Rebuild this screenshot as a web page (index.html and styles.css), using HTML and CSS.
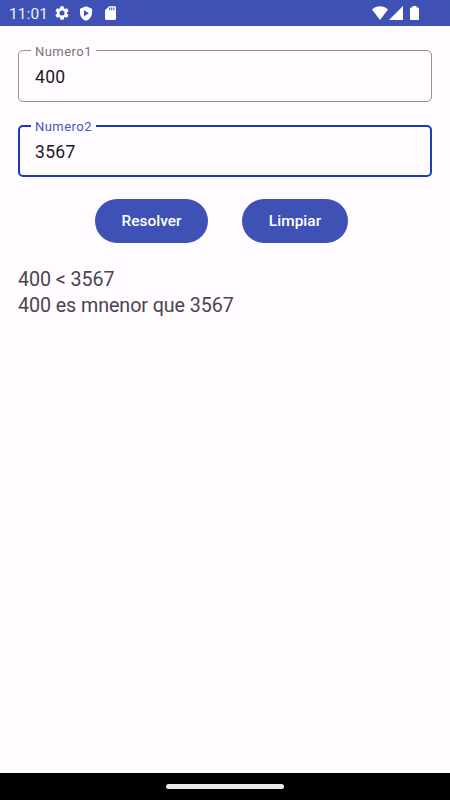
FILE: index.html
```html
<!DOCTYPE html>
<html lang="es">
<head>
<meta charset="utf-8">
<title>Comparar</title>
<link rel="stylesheet" href="styles.css">
</head>
<body>
<div class="screen">
  <header class="status">
    <span class="clock">11:01</span>
    <svg class="gear" viewBox="2 2 20 20"><path fill-rule="evenodd" d="M19.14 12.94c.04-.3.06-.61.06-.94s-.02-.64-.07-.94l2.03-1.58a.49.49 0 0 0 .12-.61l-1.92-3.32a.49.49 0 0 0-.59-.22l-2.39.96a7 7 0 0 0-1.62-.94l-.36-2.54a.48.48 0 0 0-.48-.41h-3.84a.48.48 0 0 0-.47.41l-.36 2.54c-.59.24-1.13.57-1.62.94l-2.39-.96a.48.48 0 0 0-.59.22L2.74 8.87a.48.48 0 0 0 .12.61l2.03 1.58a6 6 0 0 0 0 1.88l-2.03 1.58a.49.49 0 0 0-.12.61l1.92 3.32c.12.22.37.29.59.22l2.39-.96c.5.38 1.03.7 1.62.94l.36 2.54c.05.24.24.41.48.41h3.84c.24 0 .44-.17.47-.41l.36-2.54a7 7 0 0 0 1.62-.94l2.39.96c.22.08.47 0 .59-.22l1.92-3.32a.48.48 0 0 0-.12-.61zM12 15.6a3.6 3.6 0 1 1 0-7.2 3.6 3.6 0 0 1 0 7.2z"/></svg>
    <svg class="shield" viewBox="3 1 18 22"><path fill-rule="evenodd" d="M12 1 3 5v6c0 5.55 3.84 10.74 9 12 5.160-1.260 9-6.450 9-12V5zM9 7v9l7.500-4.500z"/></svg>
    <svg class="sd" viewBox="4 2 16 20"><path fill-rule="evenodd" d="M18 2h-8L4 8v12c0 1.100.9 2 2 2h12c1.100 0 2-.9 2-2V4c0-1.100-.9-2-2-2zM10 4h1.500v4H10zm3 0h1.500v4H13zm3 0h1.500v4H16z"/></svg>
    <svg class="wifi" viewBox="0 0 16 14"><path d="M0 3.500C4.500-1 11.500-1 16 3.500L8 14z"/></svg>
    <svg class="signal" viewBox="0 0 14 14"><path d="M14 0v14H0z"/></svg>
    <svg class="battery" viewBox="0 0 9 14"><path d="M2.500 0h4v1.500H8a1 1 0 0 1 1 1V13a1 1 0 0 1-1 1H1a1 1 0 0 1-1-1V2.500a1 1 0 0 1 1-1h1.500z"/></svg>
  </header>
  <main class="content">
    <fieldset class="field">
      <legend>Numero1</legend>
      <div class="value">400</div>
    </fieldset>
    <fieldset class="field focused">
      <legend>Numero2</legend>
      <div class="value">3567</div>
    </fieldset>
    <div class="actions">
      <button class="btn resolve">Resolver</button>
      <button class="btn clear">Limpiar</button>
    </div>
    <p class="result">400 &lt; 3567<br>400 es mnenor que 3567</p>
  </main>
  <footer class="nav"><div class="handle"></div></footer>
</div>
</body>
</html>
```
FILE: styles.css
```css
* { box-sizing: border-box; }
body { margin: 0; font-family: Roboto, "Liberation Sans", sans-serif; }
.screen { width: 450px; height: 800px; display: flex; flex-direction: column; background: #fffbff; }
.status { height: 26px; flex: none; display: flex; align-items: center; padding: 0 31px 0 9px; background: #3f51b5; color: #fff; }
.status svg { display: block; flex: none; fill: #fff; }
.clock { width: 46px; padding-top: 2px; font-size: 15.5px; line-height: 26px; letter-spacing: 0.1px; color: #eef0fb; }
.gear { width: 14px; height: 14px; }
.shield { width: 12px; height: 15px; margin-left: 11px; }
.sd { width: 11px; height: 14px; margin-left: 13px; }
.wifi { width: 16px; height: 14px; margin-left: auto; }
.signal { width: 14px; height: 14px; margin-left: 1px; }
.battery { width: 9px; height: 14px; margin-left: 7px; }
.content { flex: 1; padding: 17px 18px 0; }
.field { margin: 0 0 17px; padding: 0 0 0 12px; height: 59px; min-width: 0; border: 1px solid #929094; border-radius: 5px; }
.field legend { height: 14px; margin: 0; padding: 0 4px; font-size: 13px; line-height: 18px; letter-spacing: 0.45px; color: #77757a; }
.value { padding: 9px 0 0 4px; font-size: 17.5px; line-height: 22px; letter-spacing: 0.35px; color: #1c1b1f; }
.focused { height: 58px; border: 2px solid #1c3cb4; padding-left: 11px; }
.field.focused legend { line-height: 16px; color: #4457bb; }
.focused .value { padding-top: 8px; }
.actions { display: flex; gap: 34px; padding-left: 77px; margin-top: 22px; }
.btn { height: 44px; padding: 1px 0 0; border: 0; border-radius: 22px; background: #3f51b5; color: #fff; font: 500 15.4px/43px Roboto, "Liberation Sans", sans-serif; letter-spacing: 0.05px; }
.resolve { width: 113px; }
.clear { width: 106px; }
.result { margin: 24px 0 0; font-size: 19.7px; line-height: 26px; letter-spacing: -0.08px; color: #49454f; }
.nav { height: 27px; flex: none; display: flex; justify-content: center; padding-top: 11px; background: #000; }
.handle { width: 118px; height: 5px; border-radius: 3px; background: #ebe8eb; }
```
